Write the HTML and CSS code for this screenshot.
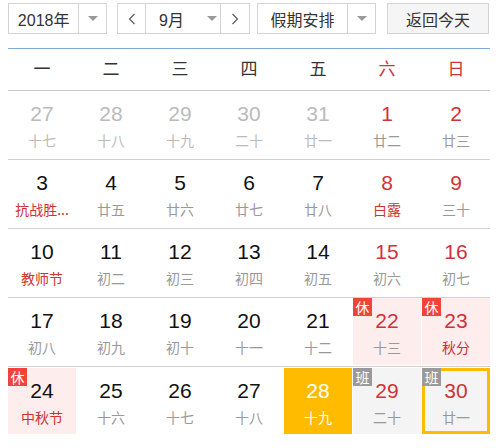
FILE: index.html
```html
<!DOCTYPE html>
<html lang="zh">
<head>
<meta charset="utf-8">
<link rel="stylesheet" href="styles.css">
</head>
<body>
<div class="cal">
  <div class="toolbar">
    <div class="select year">
      <span class="sel-label">2018年</span>
      <span class="sel-arrow"><i class="tri"></i></span>
    </div>
    <div class="select month">
      <span class="nav prev"><svg width="8" height="12" viewBox="0 0 8 12"><path d="M6.5 1 L1.5 6 L6.5 11" fill="none" stroke="#555" stroke-width="1.1"/></svg></span>
      <span class="sel-label m-label">9月<i class="tri"></i></span>
      <span class="nav next"><svg width="8" height="12" viewBox="0 0 8 12"><path d="M1.5 1 L6.5 6 L1.5 11" fill="none" stroke="#555" stroke-width="1.1"/></svg></span>
    </div>
    <div class="select holiday">
      <span class="sel-label">假期安排</span>
      <span class="sel-arrow"><i class="tri"></i></span>
    </div>
    <div class="btn-today">返回今天</div>
  </div>

  <div class="board">
    <div class="week">
      <span>一</span><span>二</span><span>三</span><span>四</span><span>五</span><span class="we">六</span><span class="we">日</span>
    </div>

    <div class="row">
      <div class="cell other"><b>27</b><em>十七</em></div>
      <div class="cell other"><b>28</b><em>十八</em></div>
      <div class="cell other"><b>29</b><em>十九</em></div>
      <div class="cell other"><b>30</b><em>二十</em></div>
      <div class="cell other"><b>31</b><em>廿一</em></div>
      <div class="cell wkend"><b>1</b><em>廿二</em></div>
      <div class="cell wkend"><b>2</b><em>廿三</em></div>
    </div>
    <div class="row">
      <div class="cell"><b>3</b><em class="fest">抗战胜...</em></div>
      <div class="cell"><b>4</b><em>廿五</em></div>
      <div class="cell"><b>5</b><em>廿六</em></div>
      <div class="cell"><b>6</b><em>廿七</em></div>
      <div class="cell"><b>7</b><em>廿八</em></div>
      <div class="cell wkend"><b>8</b><em class="fest">白露</em></div>
      <div class="cell wkend"><b>9</b><em>三十</em></div>
    </div>
    <div class="row">
      <div class="cell"><b>10</b><em class="fest">教师节</em></div>
      <div class="cell"><b>11</b><em>初二</em></div>
      <div class="cell"><b>12</b><em>初三</em></div>
      <div class="cell"><b>13</b><em>初四</em></div>
      <div class="cell"><b>14</b><em>初五</em></div>
      <div class="cell wkend"><b>15</b><em>初六</em></div>
      <div class="cell wkend"><b>16</b><em>初七</em></div>
    </div>
    <div class="row">
      <div class="cell"><b>17</b><em>初八</em></div>
      <div class="cell"><b>18</b><em>初九</em></div>
      <div class="cell"><b>19</b><em>初十</em></div>
      <div class="cell"><b>20</b><em>十一</em></div>
      <div class="cell"><b>21</b><em>十二</em></div>
      <div class="cell wkend rest"><span class="tag">休</span><b>22</b><em>十三</em></div>
      <div class="cell wkend rest"><span class="tag">休</span><b>23</b><em class="fest">秋分</em></div>
    </div>
    <div class="row last">
      <div class="cell rest"><span class="tag">休</span><b>24</b><em class="fest">中秋节</em></div>
      <div class="cell"><b>25</b><em>十六</em></div>
      <div class="cell"><b>26</b><em>十七</em></div>
      <div class="cell"><b>27</b><em>十八</em></div>
      <div class="cell today"><b>28</b><em>十九</em></div>
      <div class="cell wkend work"><span class="tag">班</span><b>29</b><em>二十</em></div>
      <div class="cell wkend work sel"><span class="tag">班</span><b>30</b><em>廿一</em></div>
    </div>
  </div>
</div>
</body>
</html>
```

FILE: styles.css
```css
* { box-sizing: border-box; }
body {
  margin: 0;
  background: #fff;
  font-family: "Noto Sans CJK SC", "Liberation Sans", sans-serif;
}
.cal {
  width: 499px;
  padding: 3px 0 0 8px;
}
.toolbar {
  display: flex;
  height: 31px;
  font-size: 16px;
  color: #333;
}
.select {
  display: flex;
  height: 31px;
  border: 1px solid #d4d4d4;
  background: #fff;
}
.sel-label {
  display: flex;
  align-items: center;
  justify-content: center;
}
.sel-arrow {
  display: flex;
  align-items: center;
  justify-content: center;
  border-left: 1px solid #d4d4d4;
}
.tri {
  display: inline-block;
  width: 0;
  height: 0;
  border-left: 5px solid transparent;
  border-right: 5px solid transparent;
  border-top: 5px solid #999;
}
.year { width: 99px; }
.year .sel-label { width: 70px; font-family: "Liberation Sans", "Noto Sans CJK SC", sans-serif; }
.year .sel-arrow { width: 28px; }
.month { width: 133px; margin-left: 10px; }
.nav {
  display: flex;
  align-items: center;
  justify-content: center;
  width: 28px;
}
.prev { border-right: 1px solid #d4d4d4; }
.next { border-left: 1px solid #d4d4d4; width: 29px; }
.m-label {
  width: 74px;
  justify-content: flex-start;
  padding-left: 13px;
  font-family: "Liberation Sans", "Noto Sans CJK SC", sans-serif;
}
.m-label .tri { margin-left: 23px; }
.holiday { width: 119px; margin-left: 7px; }
.holiday .sel-label { width: 89px; }
.holiday .sel-arrow { width: 28px; }
.btn-today {
  width: 102px;
  margin-left: 11px;
  height: 31px;
  border: 1px solid #d4d4d4;
  background: #f5f5f5;
  display: flex;
  align-items: center;
  justify-content: center;
}

.board {
  width: 482px;
  margin-top: 14px;
  border-top: 1px solid #7fa9d8;
  border-bottom: 1px solid #7fa9d8;
  padding-bottom: 13px;
}
.week {
  display: grid;
  grid-template-columns: repeat(7, 68px);
  column-gap: 1px;
  height: 42px;
  border-bottom: 1px solid #c8c8c8;
  font-size: 17px;
  color: #333;
  padding-bottom: 4px;
}
.week span {
  display: flex;
  align-items: center;
  justify-content: center;
}
.week .we { color: #c93437; }
.row {
  display: grid;
  grid-template-columns: repeat(7, 68px);
  column-gap: 1px;
  height: 69px;
  padding-bottom: 1px;
  border-bottom: 1px solid #d0d0d0;
}
.row.last { border-bottom: none; padding-top: 1px; height: 68px; }
.cell {
  position: relative;
  display: flex;
  flex-direction: column;
  align-items: center;
  padding-top: 10px;
}
.cell b {
  font-family: "Liberation Sans", Arial, sans-serif;
  font-weight: normal;
  font-size: 21px;
  line-height: 26px;
  color: #111;
}
.cell em {
  font-style: normal;
  font-size: 14px;
  line-height: 18px;
  margin-top: 4px;
  color: #999;
}
.cell em.fest { color: #cc3333; }
.cell.other b { color: #bbb; }
.cell.other em { color: #bbb; }
.cell.wkend b { color: #d0313a; }
.cell.rest { background: #fdeded; }
.cell.work { background: #f4f4f4; }
.cell.today { background: #ffbb00; }
.cell.today b, .cell.today em { color: #fff; }
.cell.sel { border: 3px solid #ffbb00; padding-top: 7px; }
.tag {
  position: absolute;
  left: 0;
  top: 0;
  width: 19px;
  height: 18px;
  font-size: 14px;
  line-height: 18px;
  text-align: center;
  color: #fff;
  background: #f0443a;
}
.work .tag { background: #9a9a9a; }
.sel .tag { left: -3px; top: -3px; }
```
